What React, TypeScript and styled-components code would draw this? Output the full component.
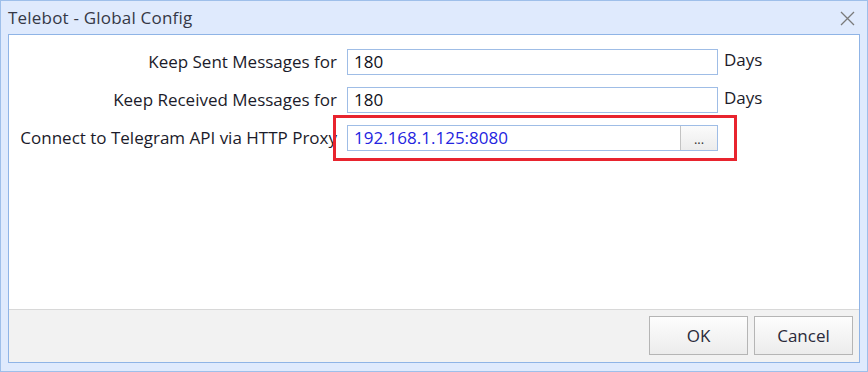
import React from "react";
import styled, { createGlobalStyle } from "styled-components";

const Global = createGlobalStyle`
  html, body { margin: 0; padding: 0; background: #ffffff; }
  * { box-sizing: border-box; }
`;

const Window = styled.div`
  width: 868px;
  height: 372px;
  background: #dfeafd;
  border: 1px solid #9ebfea;
  display: flex;
  flex-direction: column;
  font-family: "Open Sans", "Noto Sans", sans-serif;
`;

const TitleBar = styled.div`
  height: 33px;
  display: flex;
  align-items: center;
  justify-content: space-between;
  padding: 0 12px 0 7px;
`;

const Title = styled.div`
  font-size: 17px;
  font-weight: 500;
  color: #353846;
  letter-spacing: 0.2px;
  margin-top: -1px;
`;

const CloseButton = styled.div`
  width: 16px;
  height: 16px;
  display: flex;
  align-items: center;
  justify-content: center;
  margin-top: 1px;
`;

const Panel = styled.div`
  flex: 1;
  margin: 0 7px 8px 7px;
  border: 1px solid #8fb4e6;
  background: #ffffff;
  display: flex;
  flex-direction: column;
`;

const Form = styled.div`
  flex: 1;
  display: grid;
  grid-template-columns: 328px 371px auto;
  column-gap: 10px;
  row-gap: 12px;
  align-content: start;
  padding-top: 14px;
`;

const Label = styled.div`
  font-size: 17px;
  color: #1b1b2a;
  text-align: right;
  height: 26px;
  line-height: 26px;
  white-space: nowrap;
`;

const InputWrap = styled.div`
  position: relative;
  height: 26px;
`;

const TextBox = styled.div<{ $blue?: boolean }>`
  height: 26px;
  border: 1px solid #9fbde6;
  background: #fff;
  display: flex;
  align-items: stretch;
  font-size: 17px;
  color: ${(p) => (p.$blue ? "#2424e0" : "#101020")};
`;

const TextValue = styled.div`
  flex: 1;
  padding-left: 6px;
  line-height: 24px;
`;

const BrowseButton = styled.div`
  width: 37px;
  border-left: 1px solid #c3c3c3;
  background: linear-gradient(#fbfbfb, #ececec);
  display: flex;
  align-items: center;
  justify-content: center;
  font-size: 13px;
  color: #333;
  padding-top: 2px;
`;

const Unit = styled.div`
  font-size: 17px;
  color: #1b1b2a;
  height: 26px;
  line-height: 22px;
  margin-left: -4px;
`;

const Highlight = styled.div`
  position: absolute;
  left: -14px;
  right: -19px;
  top: -10px;
  bottom: -10px;
  border: 3px solid #e8242e;
  pointer-events: none;
`;

const Footer = styled.div`
  height: 53px;
  border-top: 1px solid #d8d8d8;
  background: #f2f2f2;
  display: flex;
  justify-content: flex-end;
  align-items: flex-start;
  gap: 6px;
  padding: 6px 6px 0 0;
`;

const Button = styled.div`
  width: 99px;
  height: 39px;
  border: 1px solid #b5b5b5;
  background: linear-gradient(#fdfdfd, #ececec);
  display: flex;
  align-items: center;
  justify-content: center;
  font-size: 17px;
  color: #2a2a3a;
`;

export default function App() {
  return (
    <>
      <Global />
      <Window>
        <TitleBar>
          <Title>Telebot - Global Config</Title>
          <CloseButton>
            <svg width="15" height="15" viewBox="0 0 15 15">
              <path d="M1 1 L14 14 M14 1 L1 14" stroke="#7a7a7a" strokeWidth="1.3" fill="none" />
            </svg>
          </CloseButton>
        </TitleBar>
        <Panel>
          <Form>
            <Label>Keep Sent Messages for</Label>
            <InputWrap>
              <TextBox>
                <TextValue>180</TextValue>
              </TextBox>
            </InputWrap>
            <Unit>Days</Unit>

            <Label>Keep Received Messages for</Label>
            <InputWrap>
              <TextBox>
                <TextValue>180</TextValue>
              </TextBox>
            </InputWrap>
            <Unit>Days</Unit>

            <Label>Connect to Telegram API via HTTP Proxy</Label>
            <InputWrap>
              <TextBox $blue>
                <TextValue>192.168.1.125:8080</TextValue>
                <BrowseButton>...</BrowseButton>
              </TextBox>
              <Highlight />
            </InputWrap>
            <div />
          </Form>
          <Footer>
            <Button>OK</Button>
            <Button>Cancel</Button>
          </Footer>
        </Panel>
      </Window>
    </>
  );
}
